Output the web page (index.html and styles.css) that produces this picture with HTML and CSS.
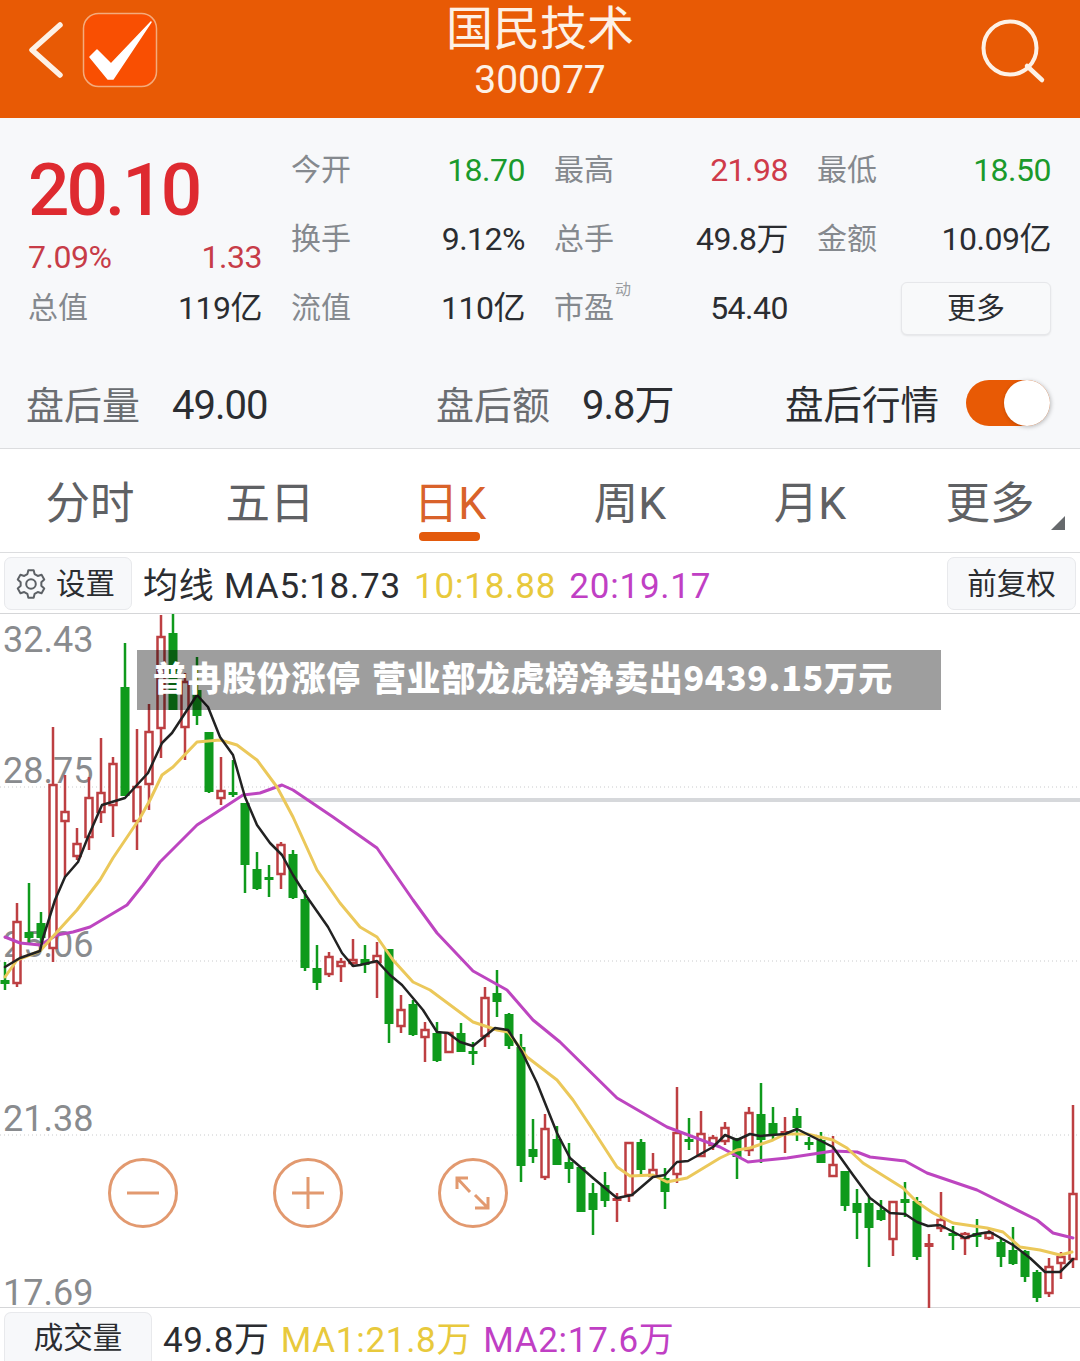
FILE: index.html
```html
<!DOCTYPE html>
<html lang="zh-CN">
<head>
  <meta charset="UTF-8" />
  <meta name="viewport" content="width=device-width, initial-scale=1.0"/>
  <title>国民技术 300077</title>
  <link rel="stylesheet" href="styles.css">
</head>
<body>
  <header class="topbar">
    <svg class="topbar-left" width="170" height="118" viewBox="0 0 170 118">
      <path d="M60 25 L32 50 L60 75" fill="none" stroke="#fdf1e6" stroke-width="5.5" stroke-linecap="round" stroke-linejoin="round"/>
      <rect x="83.5" y="13.5" width="73" height="73" rx="15" fill="#f94f02" stroke="#f4ab7c" stroke-width="1.5"/>
      <path d="M90 57 L97 50 L111 64 L151 22 L113 79 L108 79 Z" fill="#fff" stroke="#fff" stroke-width="1.5" stroke-linejoin="round"/>
    </svg>
    <div class="topbar-title">
      <div class="stock-name">国民技术</div>
      <div class="stock-code">300077</div>
    </div>
    <svg class="topbar-search" width="70" height="118" viewBox="0 0 70 118">
      <circle cx="30" cy="48" r="26.5" fill="none" stroke="#fdf1e6" stroke-width="4"/>
      <path d="M47 66 L62 80" fill="none" stroke="#fdf1e6" stroke-width="4.5" stroke-linecap="round"/>
    </svg>
  </header>

  <section class="quote">
    <div class="quote-grid">
      <div class="price-box">
        <div class="price">20.10</div>
        <div class="price-change"><span>7.09%</span><span>1.33</span></div>
      </div>
      <div class="stat"><span class="stat-label">今开</span><span class="stat-value green">18.70</span></div>
      <div class="stat"><span class="stat-label">最高</span><span class="stat-value red">21.98</span></div>
      <div class="stat"><span class="stat-label">最低</span><span class="stat-value green">18.50</span></div>
      <div class="stat"><span class="stat-label">换手</span><span class="stat-value">9.12%</span></div>
      <div class="stat"><span class="stat-label">总手</span><span class="stat-value">49.8万</span></div>
      <div class="stat"><span class="stat-label">金额</span><span class="stat-value">10.09亿</span></div>
      <div class="stat"><span class="stat-label">总值</span><span class="stat-value">119亿</span></div>
      <div class="stat"><span class="stat-label">流值</span><span class="stat-value">110亿</span></div>
      <div class="stat"><span class="stat-label">市盈<sup class="stat-sup">动</sup></span><span class="stat-value">54.40</span></div>
      <div class="stat stat-more"><button class="more-btn">更多</button></div>
    </div>

    <div class="after-hours">
      <div class="after-item"><span class="after-label">盘后量</span><span class="after-value">49.00</span></div>
      <div class="after-item"><span class="after-label">盘后额</span><span class="after-value">9.8万</span></div>
      <div class="after-item after-switch">
        <span class="after-title">盘后行情</span>
        <span class="toggle"><span class="toggle-knob"></span></span>
      </div>
    </div>
  </section>

  <nav class="tabs">
    <div class="tab">分时</div>
    <div class="tab">五日</div>
    <div class="tab tab-active">日K</div>
    <div class="tab">周K</div>
    <div class="tab">月K</div>
    <div class="tab tab-more">更多</div>
  </nav>

  <div class="ma-bar">
    <button class="tool-btn tool-settings">
      <svg width="32" height="32" viewBox="0 0 32 32">
        <polygon points="12.41,6.13 13.33,2.26 18.67,2.26 19.59,6.13 22.75,7.96 26.57,6.82 29.24,11.44 26.34,14.18 26.34,17.82 29.24,20.56 26.57,25.18 22.75,24.04 19.59,25.87 18.67,29.74 13.33,29.74 12.41,25.87 9.25,24.04 5.43,25.18 2.76,20.56 5.66,17.82 5.66,14.18 2.76,11.44 5.43,6.82 9.25,7.96" fill="none" stroke="#5d6166" stroke-width="2" stroke-linejoin="round"/>
        <circle cx="16" cy="16" r="4.8" fill="none" stroke="#5d6166" stroke-width="2"/>
      </svg>
      <span>设置</span>
    </button>
    <div class="ma-values">
      <span>均线 MA5:18.73</span>
      <span class="ma-yellow">10:18.88</span>
      <span class="ma-purple">20:19.17</span>
    </div>
    <button class="tool-btn tool-adjust">前复权</button>
  </div>

  <main class="chart">
    <div class="axis">
      <div class="axis-label axis-top">32.43</div>
      <div class="axis-label">28.75</div>
      <div class="axis-label">25.06</div>
      <div class="axis-label">21.38</div>
      <div class="axis-label axis-bottom">17.69</div>
    </div>
    <svg id="kline" class="kline" width="1080" height="694" viewBox="0 614 1080 694"></svg>

    <div class="zoom-controls">
      <svg width="70" height="70" viewBox="0 0 70 70">
        <circle cx="35" cy="35" r="33.5"/>
        <path d="M19 35 H51"/>
      </svg>
      <svg width="70" height="70" viewBox="0 0 70 70">
        <circle cx="35" cy="35" r="33.5"/>
        <path d="M19 35 H51 M35 19 V51"/>
      </svg>
      <svg width="70" height="70" viewBox="0 0 70 70">
        <circle cx="35" cy="35" r="33.5"/>
        <path d="M19 20 L32 34 M19 31 V20 H30 M37 37 L50 50 M50 39 V50 H37"/>
      </svg>
    </div>

    <div class="news-banner">普冉股份涨停 营业部龙虎榜净卖出9439.15万元</div>
  </main>

  <div class="volume-bar">
    <button class="tool-btn tool-volume">成交量</button>
    <div class="ma-values vol-values">
      <span>49.8万</span>
      <span class="ma-yellow">MA1:21.8万</span>
      <span class="ma-purple">MA2:17.6万</span>
    </div>
  </div>

  <script src="chart.js"></script>
</body>
</html>
```

FILE: styles.css
```css
* {
  box-sizing: border-box;
}

body {
  margin: 0;
  width: 1080px;
  height: 1361px;
  overflow: hidden;
  background: #fff;
  font-family: Roboto, "Noto Sans CJK SC", sans-serif;
  color: #2b2d31;
}

button {
  font-family: inherit;
  cursor: pointer;
}

.green { color: #1a9a2c; }
.red { color: #cf3b4a; }

/* top bar */
.topbar {
  height: 118px;
  background: #e85a05;
  display: flex;
  justify-content: space-between;
  color: #fdf1e6;
}

.topbar-title {
  text-align: center;
  position: absolute;
  left: 0;
  width: 1080px;
}

.stock-name {
  font-size: 47px;
  line-height: 56px;
  margin-top: 1px;
}

.stock-code {
  font-size: 39px;
  line-height: 44px;
  margin-top: 1px;
}

.topbar-search {
  margin-right: 30px;
  margin-left: auto;
}

/* quote panel */
.quote {
  height: 331px;
  background: #f7f8fa;
  border-bottom: 1px solid #dcdddf;
}

.quote-grid {
  display: grid;
  grid-template-columns: repeat(4, 234px);
  grid-auto-rows: 69px;
  column-gap: 29px;
  padding: 17px 0 0 28px;
}

.price-box {
  grid-row: span 2;
}

.price {
  font-size: 73px;
  font-weight: 500;
  line-height: 74px;
  letter-spacing: -3px;
  color: #de2a30;
  margin-top: 18px;
}

.price-change {
  display: flex;
  justify-content: space-between;
  margin-top: 10px;
  font-size: 32px;
  line-height: 40px;
  letter-spacing: -0.5px;
  color: #c73c48;
}

.stat {
  display: flex;
  justify-content: space-between;
  align-items: center;
  line-height: 40px;
}

.stat-label {
  font-size: 30px;
  color: #85898e;
  position: relative;
}

.stat-sup {
  position: absolute;
  left: 61px;
  top: -8px;
  font-size: 16px;
  line-height: 20px;
  color: #9a9da1;
}

.stat-value {
  font-size: 32px;
  letter-spacing: -0.5px;
}

.stat-more {
  justify-content: flex-end;
}

.more-btn {
  width: 150px;
  height: 53px;
  margin-top: 2px;
  background: #f8f9fa;
  border: 1px solid #e6e7ea;
  border-radius: 6px;
  box-shadow: 0 1px 2px rgba(0, 0, 0, 0.08);
  font-size: 29px;
  color: #2b2d31;
  padding: 0 0 5px;
}

.after-hours {
  display: grid;
  grid-template-columns: 410px 349px auto;
  align-items: center;
  height: 106px;
  padding: 21px 30px 0 26px;
}

.after-item {
  display: flex;
  align-items: center;
  line-height: 48px;
}

.after-label {
  font-size: 38px;
  color: #6a6d71;
  margin-right: 32px;
}

.after-value {
  font-size: 40px;
  letter-spacing: -1px;
}

.after-switch {
  justify-content: space-between;
}

.after-title {
  font-size: 38.5px;
  color: #2b2d31;
}

.toggle {
  width: 84px;
  height: 46px;
  border-radius: 23px;
  background: #e85a05;
  display: flex;
  justify-content: flex-end;
  margin-top: -6px;
}

.toggle-knob {
  width: 46px;
  height: 46px;
  border-radius: 50%;
  background: #fff;
  box-shadow: 1px 1px 4px rgba(0, 0, 0, 0.25);
}

/* period tabs */
.tabs {
  display: grid;
  grid-template-columns: repeat(6, 180px);
  height: 104px;
  border-bottom: 1px solid #dcdddf;
}

.tab {
  position: relative;
  text-align: center;
  font-size: 44.5px;
  line-height: 110px;
  color: #5f6164;
}

.tab-active {
  color: #d9622a;
}

.tab-active::after {
  content: "";
  position: absolute;
  left: 59px;
  top: 83px;
  width: 61px;
  height: 9px;
  border-radius: 4px;
  background: #e35a0c;
}

.tab-more::after {
  content: "";
  position: absolute;
  right: 15px;
  top: 67px;
  border-style: solid;
  border-width: 0 0 14px 14px;
  border-color: transparent transparent #66696c transparent;
}

/* moving average bars */
.ma-bar {
  height: 61px;
  display: flex;
  align-items: center;
  padding: 0 4px;
  border-bottom: 1px solid #d5d6d8;
}

.tool-btn {
  height: 53px;
  background: #f7f8fa;
  border: 1px solid #e8e9ec;
  border-radius: 7px;
  font-size: 29.5px;
  color: #2b2d31;
  padding: 0 0 5px;
}

.tool-settings {
  width: 128px;
  display: flex;
  align-items: center;
  padding-left: 10px;
  gap: 9px;
}

.tool-settings svg {
  margin-top: 6px;
}

.ma-values {
  display: flex;
  align-items: center;
  font-size: 35px;
  line-height: 48px;
  letter-spacing: 0.8px;
  gap: 13px;
  margin: 8px 0 0 11px;
  white-space: nowrap;
}

.ma-yellow { color: #e8c93c; }
.ma-purple { color: #c03fc4; }

.tool-adjust {
  width: 129px;
  margin-left: auto;
}

/* chart */
.chart {
  position: relative;
  height: 694px;
  border-bottom: 1px solid #d5d6d8;
}

.axis {
  position: absolute;
  left: 3px;
  top: 11px;
}

.axis-label {
  height: 174px;
  font-size: 36px;
  line-height: 30px;
  color: #898b8e;
}

.axis-top {
  height: 131px;
}

.axis-bottom {
  height: 30px;
}

.kline {
  position: absolute;
  left: 0;
  top: 0;
}

.zoom-controls {
  position: absolute;
  left: 108px;
  top: 544px;
  display: flex;
  gap: 95px;
}

.zoom-controls svg {
  fill: none;
  stroke: #e2996f;
  stroke-width: 3;
}

.news-banner {
  position: absolute;
  left: 137px;
  top: 36px;
  width: 804px;
  height: 60px;
  padding-left: 16px;
  background: rgba(0, 0, 0, 0.38);
  color: #fff;
  font-family: "Noto Sans CJK SC", sans-serif;
  font-weight: 900;
  font-size: 34px;
  line-height: 53px;
  letter-spacing: 0.6px;
  word-spacing: 3px;
  white-space: nowrap;
}

/* volume row */
.volume-bar {
  height: 53px;
  display: flex;
  align-items: flex-start;
  padding: 4px 0 0 4px;
  overflow: hidden;
}

.tool-volume {
  width: 148px;
  height: 49px;
  border-bottom: none;
  border-radius: 7px 7px 0 0;
}

.vol-values {
  margin-top: 5px;
  letter-spacing: 0.7px;
  gap: 11px;
}
```

FILE: chart.js
```js
// each candle: [high, body top, body bottom, low, kind]
// kind: r = hollow red, R = solid red, g = solid green
const candles = [
  [962, 980, 984, 990, "g"], [903, 922, 983, 987, "r"], [883, 932, 938, 943, "g"], [912, 923, 938, 943, "g"],
  [727, 785, 948, 962, "r"], [775, 812, 821, 877, "r"], [828, 844, 856, 860, "r"], [777, 798, 837, 850, "r"],
  [738, 793, 812, 823, "r"], [757, 764, 805, 837, "r"], [643, 687, 796, 796, "g"], [729, 787, 821, 850, "r"],
  [704, 732, 784, 810, "r"], [615, 637, 728, 758, "r"], [613, 633, 710, 710, "g"], [673, 682, 727, 760, "r"],
  [657, 690, 716, 725, "g"], [732, 732, 792, 793, "g"], [757, 791, 798, 805, "r"], [760, 792, 795, 797, "g"],
  [803, 803, 865, 893, "g"], [852, 869, 889, 890, "g"], [865, 877, 879, 897, "g"], [842, 845, 874, 889, "r"],
  [850, 854, 898, 899, "g"], [890, 899, 968, 971, "g"], [945, 968, 983, 990, "g"], [952, 957, 974, 977, "r"],
  [958, 962, 966, 982, "r"], [939, 960, 963, 967, "r"], [945, 959, 965, 973, "g"], [942, 956, 962, 998, "r"],
  [949, 949, 1024, 1043, "g"], [995, 1010, 1026, 1033, "r"], [1000, 1004, 1035, 1036, "g"], [1022, 1030, 1037, 1062, "r"],
  [1022, 1033, 1061, 1062, "g"], [1033, 1033, 1052, 1052, "r"], [1023, 1033, 1052, 1052, "g"], [1042, 1051, 1053, 1065, "g"],
  [987, 998, 1036, 1047, "r"], [970, 993, 1002, 1017, "g"], [1013, 1014, 1046, 1049, "g"], [1034, 1047, 1166, 1182, "g"],
  [1119, 1149, 1157, 1163, "g"], [1114, 1129, 1177, 1180, "r"], [1126, 1139, 1165, 1165, "g"], [1143, 1162, 1169, 1183, "g"],
  [1167, 1167, 1212, 1212, "g"], [1183, 1193, 1210, 1235, "g"], [1172, 1185, 1201, 1207, "g"], [1193, 1198, 1201, 1222, "R"],
  [1143, 1143, 1195, 1202, "r"], [1139, 1142, 1170, 1175, "g"], [1153, 1170, 1176, 1177, "r"], [1168, 1178, 1192, 1209, "g"],
  [1087, 1133, 1174, 1183, "r"], [1118, 1139, 1141, 1150, "g"], [1111, 1134, 1156, 1157, "r"], [1135, 1138, 1145, 1150, "r"],
  [1122, 1128, 1141, 1145, "r"], [1138, 1138, 1157, 1179, "g"], [1107, 1113, 1150, 1156, "r"], [1083, 1114, 1140, 1163, "g"],
  [1107, 1123, 1135, 1140, "g"], [1117, 1131, 1134, 1153, "R"], [1108, 1116, 1128, 1141, "g"], [1137, 1142, 1144, 1150, "g"],
  [1132, 1140, 1163, 1163, "g"], [1136, 1165, 1176, 1177, "r"], [1171, 1171, 1206, 1211, "g"], [1189, 1203, 1213, 1239, "g"],
  [1197, 1203, 1228, 1267, "g"], [1200, 1210, 1220, 1221, "g"], [1202, 1202, 1239, 1256, "r"], [1182, 1199, 1203, 1217, "g"],
  [1197, 1201, 1257, 1260, "g"], [1234, 1243, 1247, 1308, "R"], [1192, 1220, 1228, 1232, "r"], [1226, 1233, 1236, 1250, "g"],
  [1232, 1234, 1238, 1255, "r"], [1219, 1233, 1237, 1247, "g"], [1229, 1233, 1238, 1240, "r"], [1238, 1242, 1257, 1267, "g"],
  [1227, 1250, 1264, 1265, "g"], [1250, 1251, 1277, 1282, "g"], [1270, 1272, 1298, 1302, "g"], [1258, 1267, 1293, 1297, "r"],
  [1252, 1257, 1263, 1279, "r"], [1105, 1194, 1259, 1268, "r"]
];

const ma5 = "5,967 20,958 40,951 43,938 55,900 65,877 78,862 88,837 102,805 125,798 148,773 162,743 172,733 197,695 208,707 220,737 233,755 245,797 257,825 270,843 282,855 293,875 307,897 328,927 342,953 353,966 360,965 377,961 390,975 402,985 423,1010 437,1032 448,1033 460,1042 473,1046 495,1028 508,1030 522,1052 537,1083 557,1133 570,1158 593,1178 617,1198 632,1195 653,1177 665,1175 677,1162 688,1161 713,1147 720,1140 725,1135 737,1140 750,1134 760,1136 785,1134 797,1129 833,1147 853,1175 870,1198 890,1213 905,1214 917,1222 928,1226 940,1225 965,1238 977,1234 990,1232 1013,1245 1030,1258 1045,1272 1060,1272 1073,1259";
const ma10 = "5,977 17,960 40,951 57,932 77,910 100,880 113,858 140,818 150,800 162,775 173,767 197,742 220,740 237,745 257,760 277,787 293,817 317,870 340,903 360,927 377,937 393,960 413,982 430,990 473,1022 497,1030 508,1032 527,1057 557,1080 573,1100 593,1130 617,1167 630,1176 653,1175 667,1182 687,1178 720,1158 737,1150 750,1148 773,1140 785,1134 807,1134 833,1140 847,1148 863,1163 903,1188 917,1202 933,1213 953,1223 987,1228 1003,1232 1020,1247 1040,1250 1060,1255 1072,1252";
const ma20 = "5,937 20,943 40,945 57,935 73,932 90,927 127,905 143,885 160,862 197,825 217,812 243,795 260,793 282,785 293,790 333,817 377,848 413,900 437,933 473,971 507,990 533,1020 560,1042 617,1098 667,1127 720,1147 748,1162 787,1158 833,1151 857,1152 870,1157 905,1161 927,1173 977,1190 1037,1220 1053,1233 1073,1238";

const RED = "#bd3f42";
const GREEN = "#0f9a1c";
const svg = document.getElementById("kline");
const NS = "http://www.w3.org/2000/svg";

function add(tag, attrs) {
  const el = document.createElementNS(NS, tag);
  Object.keys(attrs).forEach(k => el.setAttribute(k, attrs[k]));
  svg.appendChild(el);
}

[787, 961, 1135].forEach(y => {
  add("line", { x1: 0, x2: 1080, y1: y, y2: y, stroke: "#c9cacc", "stroke-width": 1, "stroke-dasharray": "1 3" });
});
add("line", { x1: 250, x2: 1080, y1: 800, y2: 800, stroke: "#d6d8db", "stroke-width": 4 });

candles.forEach((c, i) => {
  const [high, top, bottom, low, kind] = c;
  const x = 5 + 12 * i;
  const color = kind === "g" ? GREEN : RED;
  add("line", { x1: x, x2: x, y1: high, y2: low, stroke: color, "stroke-width": 2.5 });
  if (kind === "r") {
    add("rect", { x: x - 3.5, y: top, width: 7, height: Math.max(bottom - top, 3), fill: "#fff", stroke: color, "stroke-width": 2.5 });
  } else {
    add("rect", { x: x - 4.5, y: top, width: 9, height: Math.max(bottom - top, 3), fill: color });
  }
});

function line(points, color, width) {
  add("polyline", { points, fill: "none", stroke: color, "stroke-width": width, "stroke-linejoin": "round", "stroke-linecap": "round" });
}
line(ma20, "#bd45c0", 3);
line(ma10, "#ebc85a", 3);
line(ma5, "#222", 2.5);
```
